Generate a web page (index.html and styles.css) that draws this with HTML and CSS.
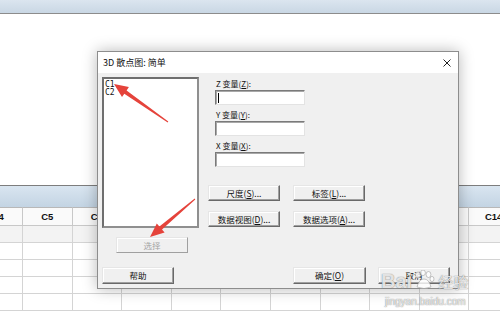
FILE: index.html
```html
<!DOCTYPE html>
<html lang="zh">
<head>
<meta charset="utf-8">
<link rel="stylesheet" href="styles.css">
</head>
<body>
<div class="app">
  <div class="topbar"></div>
  <div class="blank"></div>
  <div class="sheet">
    <div class="band"></div>
    <div class="grid">
      <div class="hc">C4</div><div class="hc">C5</div><div class="hc">C6</div><div class="hc">C7</div><div class="hc">C8</div><div class="hc">C9</div><div class="hc">C10</div><div class="hc">C11</div><div class="hc">C12</div><div class="hc">C13</div><div class="hc">C14</div>
      <div class="c e"></div><div class="c e"></div><div class="c e"></div><div class="c e"></div><div class="c e"></div><div class="c e"></div><div class="c e"></div><div class="c e"></div><div class="c e"></div><div class="c e"></div><div class="c e"></div>
      <div class="c"></div><div class="c"></div><div class="c"></div><div class="c"></div><div class="c"></div><div class="c"></div><div class="c"></div><div class="c"></div><div class="c"></div><div class="c"></div><div class="c"></div>
      <div class="c"></div><div class="c"></div><div class="c"></div><div class="c"></div><div class="c"></div><div class="c"></div><div class="c"></div><div class="c"></div><div class="c"></div><div class="c"></div><div class="c"></div>
      <div class="c"></div><div class="c"></div><div class="c"></div><div class="c"></div><div class="c"></div><div class="c"></div><div class="c"></div><div class="c"></div><div class="c"></div><div class="c"></div><div class="c"></div>
      <div class="c"></div><div class="c"></div><div class="c"></div><div class="c"></div><div class="c"></div><div class="c"></div><div class="c"></div><div class="c"></div><div class="c"></div><div class="c"></div><div class="c"></div>
    </div>
  </div>
</div>

<div class="dialog">
  <div class="titlebar">
    <span class="title">3D 散点图: 简单</span>
    <svg class="close" width="8" height="8" viewBox="0 0 8 8"><path d="M0.5 0.5L7.5 7.5M7.5 0.5L0.5 7.5" stroke="#222" stroke-width="1"/></svg>
  </div>
  <div class="dbody">
    <div class="top">
      <div class="left">
        <div class="list">
          <div class="item">C1</div>
          <div class="item">C2</div>
        </div>
        <div class="btn disabled sel">选择</div>
      </div>
      <div class="right">
        <div class="field">
          <div class="lbl">Z 变量(<u>Z</u>):</div>
          <div class="inp"><span class="caret"></span></div>
        </div>
        <div class="field">
          <div class="lbl">Y 变量(<u>Y</u>):</div>
          <div class="inp"></div>
        </div>
        <div class="field">
          <div class="lbl">X 变量(<u>X</u>):</div>
          <div class="inp"></div>
        </div>
        <div class="btngrid">
          <div class="btn">尺度(<u>S</u>)...</div>
          <div class="btn">标签(<u>L</u>)...</div>
          <div class="btn">数据视图(<u>D</u>)...</div>
          <div class="btn">数据选项(<u>A</u>)...</div>
        </div>
      </div>
    </div>
    <div class="bottom">
      <div class="btn tall">帮助</div>
      <div class="okgroup">
        <div class="btn tall">确定(<u>O</u>)</div>
        <div class="btn tall">取消</div>
      </div>
    </div>
  </div>
</div>

<svg class="arrows" width="500" height="317" viewBox="0 0 500 317">
  <polygon fill="#e5433b" points="168.3,121.6 126.6,90.4 128.9,87.1 114,84 122.0,97.0 124.3,93.7 167.7,122.4"/>
  <polygon fill="#e5433b" points="194.7,198.6 159.4,226.4 156.8,223.4 150,237 164.6,232.6 162.0,229.5 195.3,199.4"/>
</svg>

<div class="watermark">
  <div class="wm-logo">
    <span>Bai</span>
    <svg class="paw" width="22" height="20" viewBox="0 0 22 20">
      <g fill="rgba(255,255,255,0.8)" stroke="rgba(140,140,140,0.6)" stroke-width="0.8">
        <ellipse cx="5" cy="5" rx="2.4" ry="3"/>
        <ellipse cx="10" cy="2.8" rx="2.4" ry="2.8"/>
        <ellipse cx="15.5" cy="4.5" rx="2.4" ry="3"/>
        <ellipse cx="19" cy="9" rx="2" ry="2.6"/>
        <path d="M4 17 Q6 9 11 9 Q16 9 18 17 Q11 20 4 17Z"/>
      </g>
    </svg>
    <span class="cn">经验</span>
  </div>
  <div class="wm-url">jingyan.baidu.com</div>
</div>
</body>
</html>
```

FILE: styles.css
```css
* { box-sizing: border-box; }
html, body { margin: 0; padding: 0; }
body {
  width: 500px;
  height: 317px;
  overflow: hidden;
  position: relative;
  background: #fff;
  font-family: "Noto Sans CJK SC", "Liberation Sans", sans-serif;
}
.app { width: 500px; }
.topbar {
  height: 14px;
  background: linear-gradient(#dbe5ef, #c9d7e4);
  border-bottom: 1px solid #8c8c8c;
}
.blank { height: 171px; background: #fff; }
.sheet { overflow: hidden; }
.band {
  height: 22px;
  border-top: 1px solid #7d7d7d;
  background: linear-gradient(#d9e5f0, #c3d4e3);
}
.grid {
  display: grid;
  grid-template-columns: repeat(11, 49.6px);
  margin-left: -26.6px;
}
.hc {
  height: 19px;
  border-right: 1px solid #c8c8c8;
  border-bottom: 1px solid #c8c8c8;
  border-top: 1px solid #b8b8b8;
  background: #fafafa;
  font-family: "Liberation Sans", Arial, sans-serif;
  font-weight: bold;
  font-size: 9.5px;
  line-height: 17px;
  text-align: center;
  color: #111;
}
.c {
  height: 17px;
  border-right: 1px solid #d4d4d4;
  border-bottom: 1px solid #d4d4d4;
  background: #fff;
}
.c.e { background: #f3f3f3; }

.dialog {
  position: absolute;
  left: 97px;
  top: 51px;
  width: 362px;
  height: 238px;
  border: 1px solid #8d8d8d;
  background: #f0f0f0;
  box-shadow: 0 0 14px rgba(0, 0, 0, 0.28);
  display: flex;
  flex-direction: column;
}
.titlebar {
  height: 21px;
  background: #fff;
  display: flex;
  align-items: center;
  justify-content: space-between;
  padding: 0 7px 0 5px;
}
.title { font-size: 9px; color: #111; line-height: 21px; }
.close { display: block; }
.dbody {
  flex: 1;
  padding: 4px 8px 0 4px;
  font-size: 9px;
  color: #000;
}
.top { display: flex; gap: 9px; }
.left { width: 97px; display: flex; flex-direction: column; }
.list {
  height: 151px;
  background: #fff;
  border: 2px solid;
  border-color: #6f6f6f #8f8f8f #8f8f8f #6f6f6f;
  padding: 2px 1px;
}
.item {
  font-family: "DejaVu Sans Mono", "Liberation Mono", monospace;
  font-size: 8px;
  line-height: 8px;
  color: #111;
}
.btn {
  width: 72px;
  height: 16px;
  background: #f0f0f0;
  border: 1px solid;
  border-color: #e6e6e6 #696969 #696969 #e6e6e6;
  box-shadow: inset -1px -1px 0 #a0a0a0, inset 1px 1px 0 #fff;
  font-size: 8.5px;
  line-height: 14px;
  text-align: center;
  color: #111;
  white-space: nowrap;
}
.btn u { text-decoration: underline; }
.btn.tall { height: 17px; line-height: 15px; }
.sel { margin-top: 9px; margin-left: 14px; }
.btn.disabled {
  color: #a3a3a3;
  border-color: #e6e6e6 #a0a0a0 #a0a0a0 #e6e6e6;
  box-shadow: inset 1px 1px 0 #fff;
}
.right { display: flex; flex-direction: column; padding-top: 1px; }
.field { margin-left: 7px; margin-bottom: 4px; }
.field:nth-child(3) { margin-bottom: 0; }
.lbl {
  height: 11px;
  line-height: 11px;
  font-size: 8px;
  padding-left: 1px;
  color: #111;
}
.lbl u { text-decoration: underline; }
.inp {
  margin-top: 1px;
  width: 90px;
  height: 15px;
  background: #fff;
  border: 1px solid;
  border-color: #7a7a7a #e3e3e3 #e3e3e3 #7a7a7a;
  box-shadow: inset 1px 1px 0 #a8a8a8;
  padding: 2px 0 0 2px;
}
.caret { display: block; width: 1px; height: 10px; background: #000; }
.btngrid {
  margin-top: 18px;
  display: grid;
  grid-template-columns: 72px 72px;
  column-gap: 13px;
  row-gap: 10px;
}
.bottom {
  margin-top: 14px;
  display: flex;
  justify-content: space-between;
}
.okgroup { display: flex; gap: 12px; }
.okgroup .btn:first-child { width: 73px; }

.arrows {
  position: absolute;
  left: 0;
  top: 0;
  pointer-events: none;
}
.watermark {
  position: absolute;
  left: 381px;
  top: 270px;
  pointer-events: none;
  color: rgba(255, 255, 255, 0.8);
  text-shadow: 0 0 1px rgba(100, 100, 100, 0.7), 0 0 1px rgba(100, 100, 100, 0.5);
}
.wm-logo {
  display: flex;
  align-items: flex-end;
  font-family: "Liberation Sans", Arial, sans-serif;
  font-weight: bold;
  font-size: 20px;
  line-height: 20px;
}
.wm-logo .paw { margin: 0 1px 1px 1px; }
.wm-logo .cn {
  font-family: "Noto Sans CJK SC", sans-serif;
  font-weight: normal;
  font-size: 15px;
  line-height: 18px;
  margin-left: 2px;
}
.wm-url {
  font-family: "Liberation Sans", Arial, sans-serif;
  font-size: 10px;
  line-height: 12px;
  margin-top: 5px;
  margin-left: 4px;
}
```
